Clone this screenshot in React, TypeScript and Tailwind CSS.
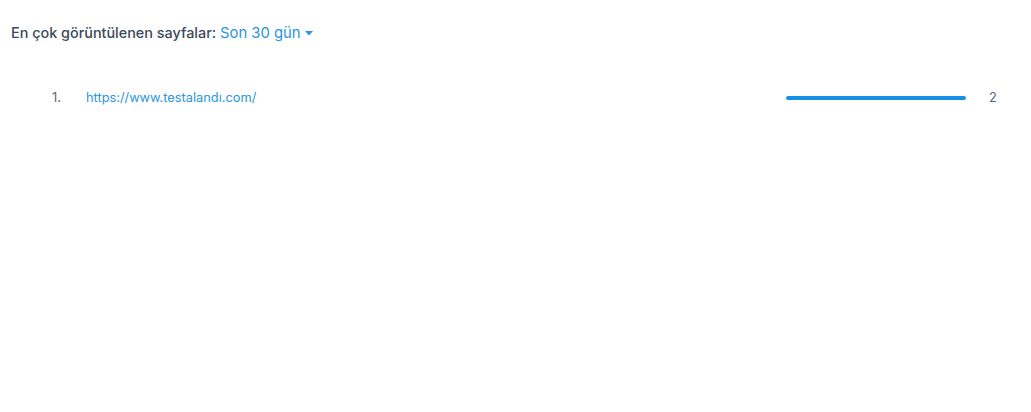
export default function App() {
  return (
    <div className="w-[1031px] h-[412px] bg-white" style={{ fontFamily: 'Inter, "Liberation Sans", sans-serif' }}>
      <div className="pl-[11px] pt-[23px] flex items-center text-[14.4px] leading-[20px]">
        <span className="text-[#3b4a5c] font-medium">En çok görüntülenen sayfalar:</span>
        <span className="ml-[4px] text-[#2b95de] text-[14.8px]">Son 30 gün</span>
        <svg className="ml-[4px]" width="8" height="5" viewBox="0 0 8 5"><path d="M0 0 L8 0 L4 4.5 Z" fill="#2b95de" /></svg>
      </div>
      <div className="mt-[45px] flex items-center h-[20px] text-[12.8px]">
        <span className="ml-[52px] w-[34px] text-[#5a6673]">1.</span>
        <span className="text-[#2b95de] flex-1">https://www.testalandı.com/</span>
        <div className="w-[180px] h-[4px] rounded-full bg-[#1490e6]" />
        <span className="ml-[23px] w-[42px] text-[#5a6673]">2</span>
      </div>
    </div>
  );
}
